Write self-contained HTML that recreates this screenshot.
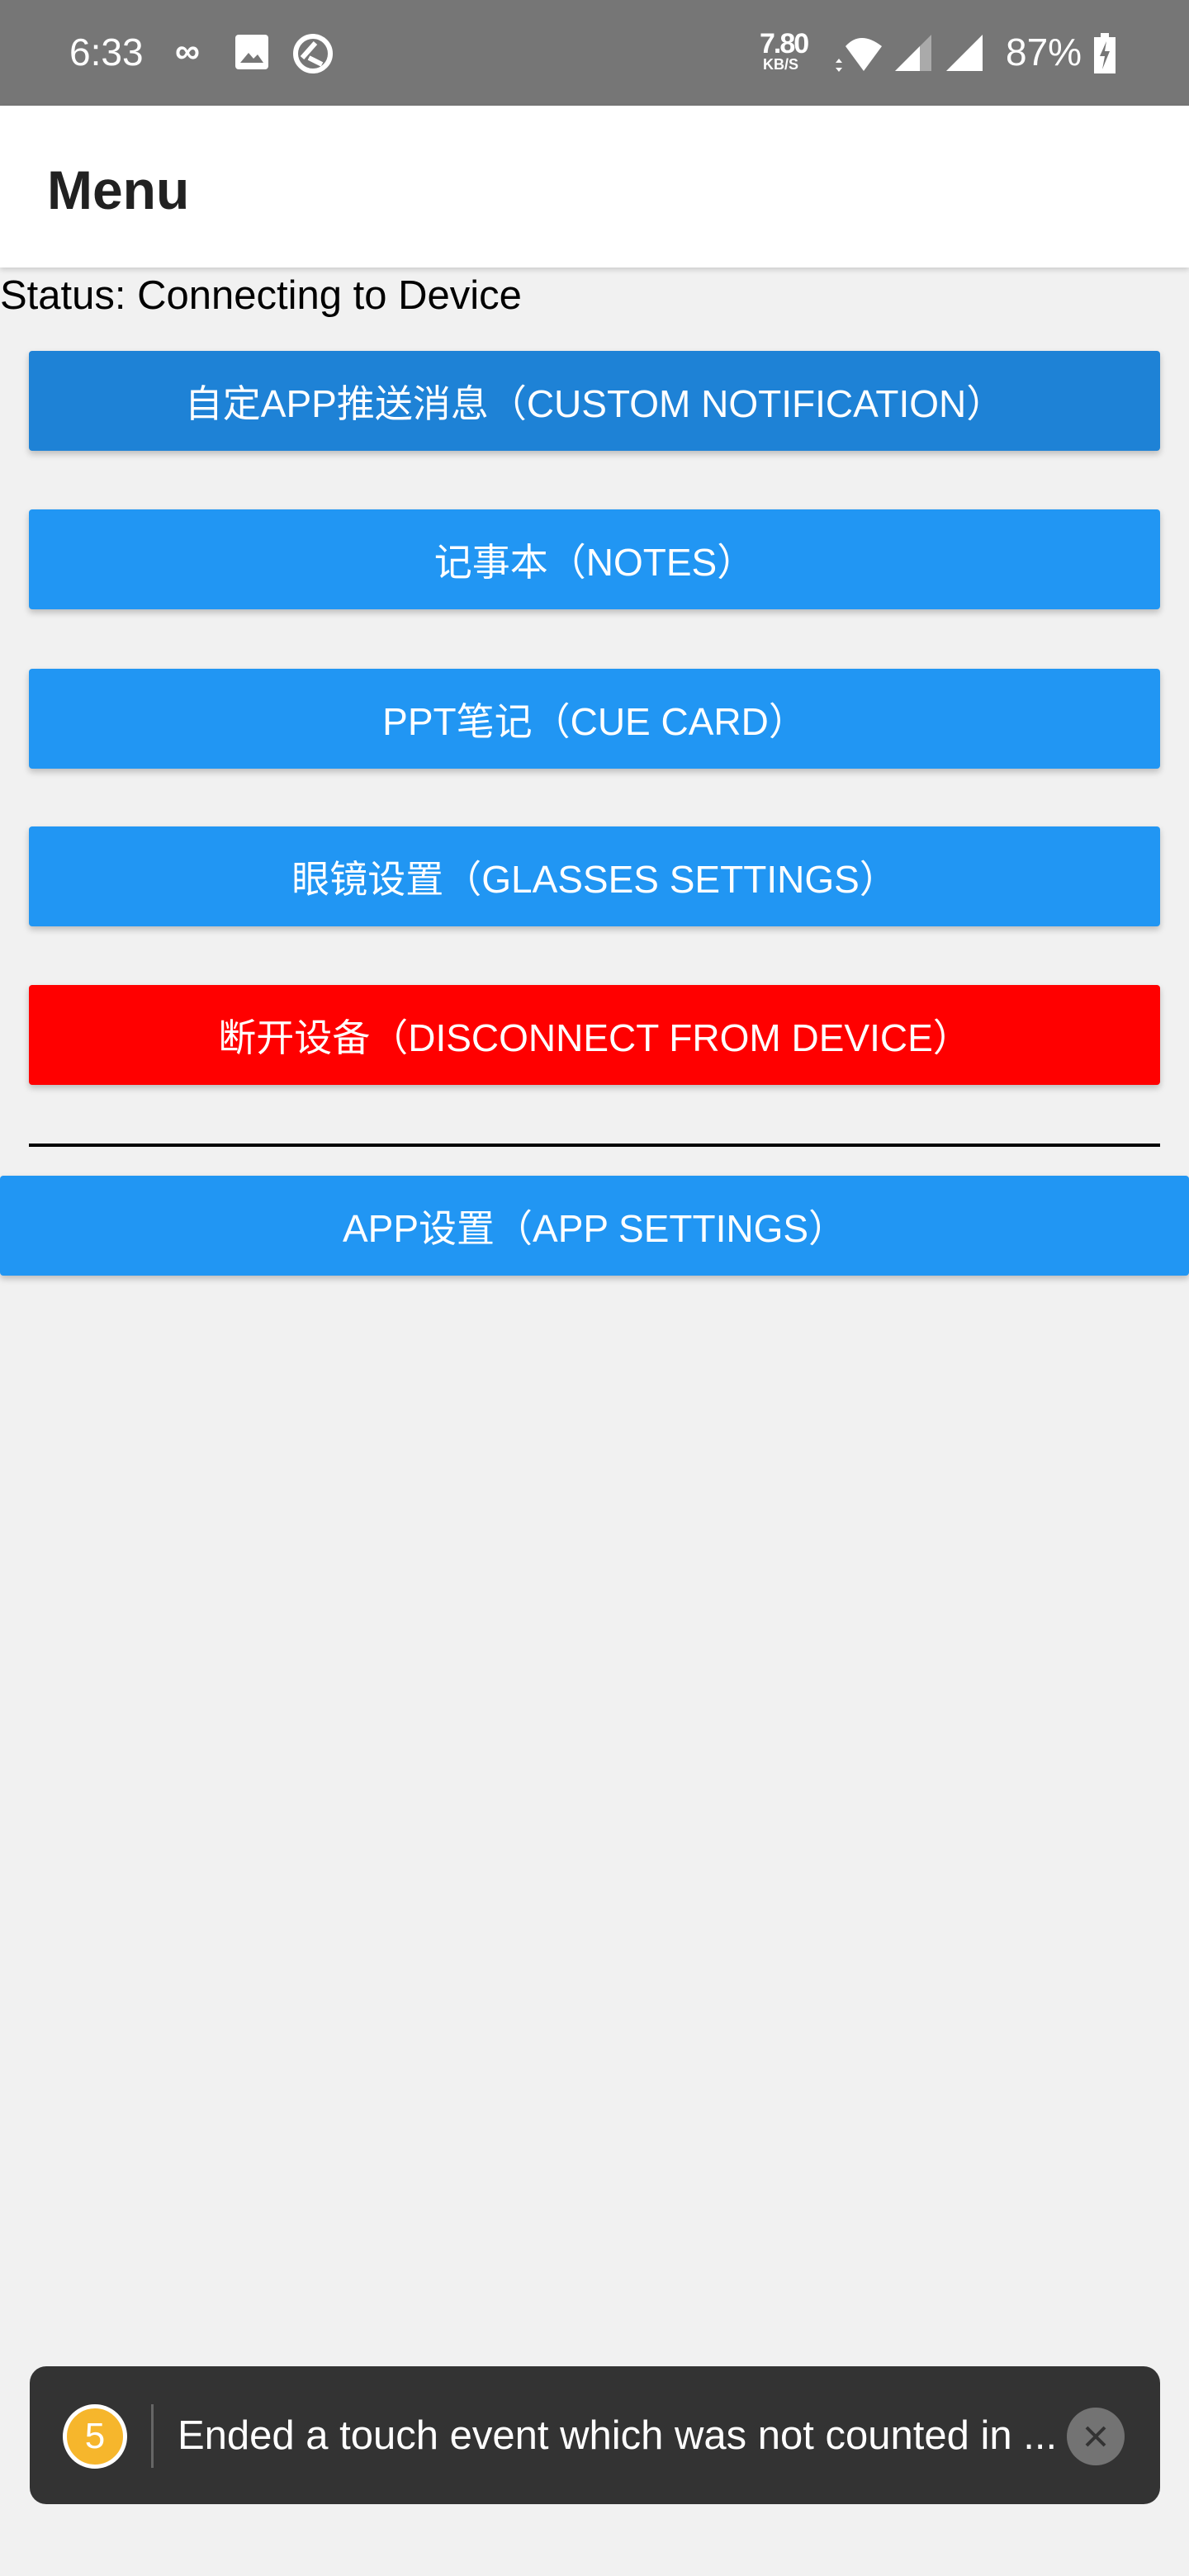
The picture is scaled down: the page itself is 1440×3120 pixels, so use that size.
<!DOCTYPE html>
<html><head><meta charset="utf-8"><style>
*{margin:0;padding:0;box-sizing:border-box}
body{width:1440px;height:3120px;background:#f1f1f1;font-family:"Liberation Sans","Noto Sans CJK SC",sans-serif;position:relative;overflow:hidden}
.sb{position:absolute;left:0;top:0;width:1440px;height:128px;background:#767676;color:#fff}
.ab{position:absolute;left:0;top:128px;width:1440px;height:196px;background:#fff;box-shadow:0 3px 6px rgba(0,0,0,.15)}
.ab span{position:absolute;left:57px;top:64px;font-size:66px;font-weight:bold;color:#212121}
.st{position:absolute;left:0;top:330px;font-size:49px;color:#000}
.btn{position:absolute;left:35px;width:1370px;height:121px;background:#2196f3;color:#fff;font-size:46px;display:flex;align-items:center;justify-content:center;border-radius:4px;box-shadow:0 4px 8px rgba(0,0,0,.22)}
.toast{position:absolute;left:36px;top:2866px;width:1369px;height:167px;background:#333;border-radius:20px}
</style></head><body>
<div class="sb">
<span style="position:absolute;left:84px;top:36px;font-size:46px">6:33</span>
<span style="position:absolute;left:212px;top:38px;font-size:42px;font-weight:bold">∞</span>
<div style="position:absolute;left:285px;top:42px;width:40px;height:42px;background:#fff;border-radius:4px"><svg width="40" height="42"><path d="M6 34 L16 22 L22 29 L27 24 L34 34Z" fill="#767676"/></svg></div>
<svg style="position:absolute;left:352px;top:38px" width="54" height="54"><circle cx="27" cy="27" r="21" fill="none" stroke="#fff" stroke-width="6"/><path d="M14 32 L30 14 M22 32 L38 40" stroke="#fff" stroke-width="6"/></svg>
<span style="position:absolute;left:920px;top:34px;font-size:34px;font-weight:bold;letter-spacing:-2px">7.80</span>
<span style="position:absolute;left:924px;top:68px;font-size:18px;font-weight:bold">KB/S</span>
<svg style="position:absolute;left:1008px;top:38px" width="70" height="52"><path d="M16 18 Q34 -2 60 18 L38 48Z" fill="#fff"/><path d="M8 62 M4 38 l4 -5 4 5z M4 44 l4 5 4 -5z" fill="#fff"/></svg>
<svg style="position:absolute;left:1082px;top:40px" width="50" height="48"><path d="M2 46 L46 2 L46 46Z" fill="#aaa"/><path d="M2 46 L32 16 L32 46Z" fill="#fff"/></svg>
<svg style="position:absolute;left:1144px;top:40px" width="50" height="48"><path d="M2 46 L46 2 L46 46Z" fill="#fff"/></svg>
<span style="position:absolute;left:1218px;top:36px;font-size:46px">87%</span>
<svg style="position:absolute;left:1325px;top:40px" width="26" height="50"><rect x="8" y="0" width="10" height="5" fill="#fff"/><rect x="0" y="5" width="26" height="44" fill="#fff"/><path d="M15 10 L7 28 L13 28 L10 44 L19 22 L13 22Z" fill="#767676"/></svg>
</div>
<div class="ab"><span>Menu</span></div>
<div class="st">Status: Connecting to Device</div>
<div class="btn" style="top:425px;background:#1e82d6">自定APP推送消息（CUSTOM NOTIFICATION）</div>
<div class="btn" style="top:617px">记事本（NOTES）</div>
<div class="btn" style="top:810px">PPT笔记（CUE CARD）</div>
<div class="btn" style="top:1001px">眼镜设置（GLASSES SETTINGS）</div>
<div class="btn" style="top:1193px;background:#ff0000">断开设备（DISCONNECT FROM DEVICE）</div>
<div style="position:absolute;left:35px;top:1385px;width:1370px;height:4px;background:#000"></div>
<div class="btn" style="top:1424px;left:0;width:1440px">APP设置（APP SETTINGS）</div>
<div class="toast">
<div style="position:absolute;left:40px;top:46px;width:78px;height:78px;border-radius:50%;background:#f6b62c;border:5px solid #fff;color:#fff;font-size:44px;display:flex;align-items:center;justify-content:center">5</div>
<div style="position:absolute;left:147px;top:46px;width:3px;height:77px;background:#666"></div>
<div style="position:absolute;left:179px;top:56px;font-size:49px;color:#fff;white-space:nowrap">Ended a touch event which was not counted in ...</div>
<div style="position:absolute;left:1256px;top:50px;width:70px;height:70px;border-radius:50%;background:#737373"><svg width="70" height="70"><path d="M24 24 L46 46 M46 24 L24 46" stroke="#333" stroke-width="4"/></svg></div>
</div>
</body></html>
